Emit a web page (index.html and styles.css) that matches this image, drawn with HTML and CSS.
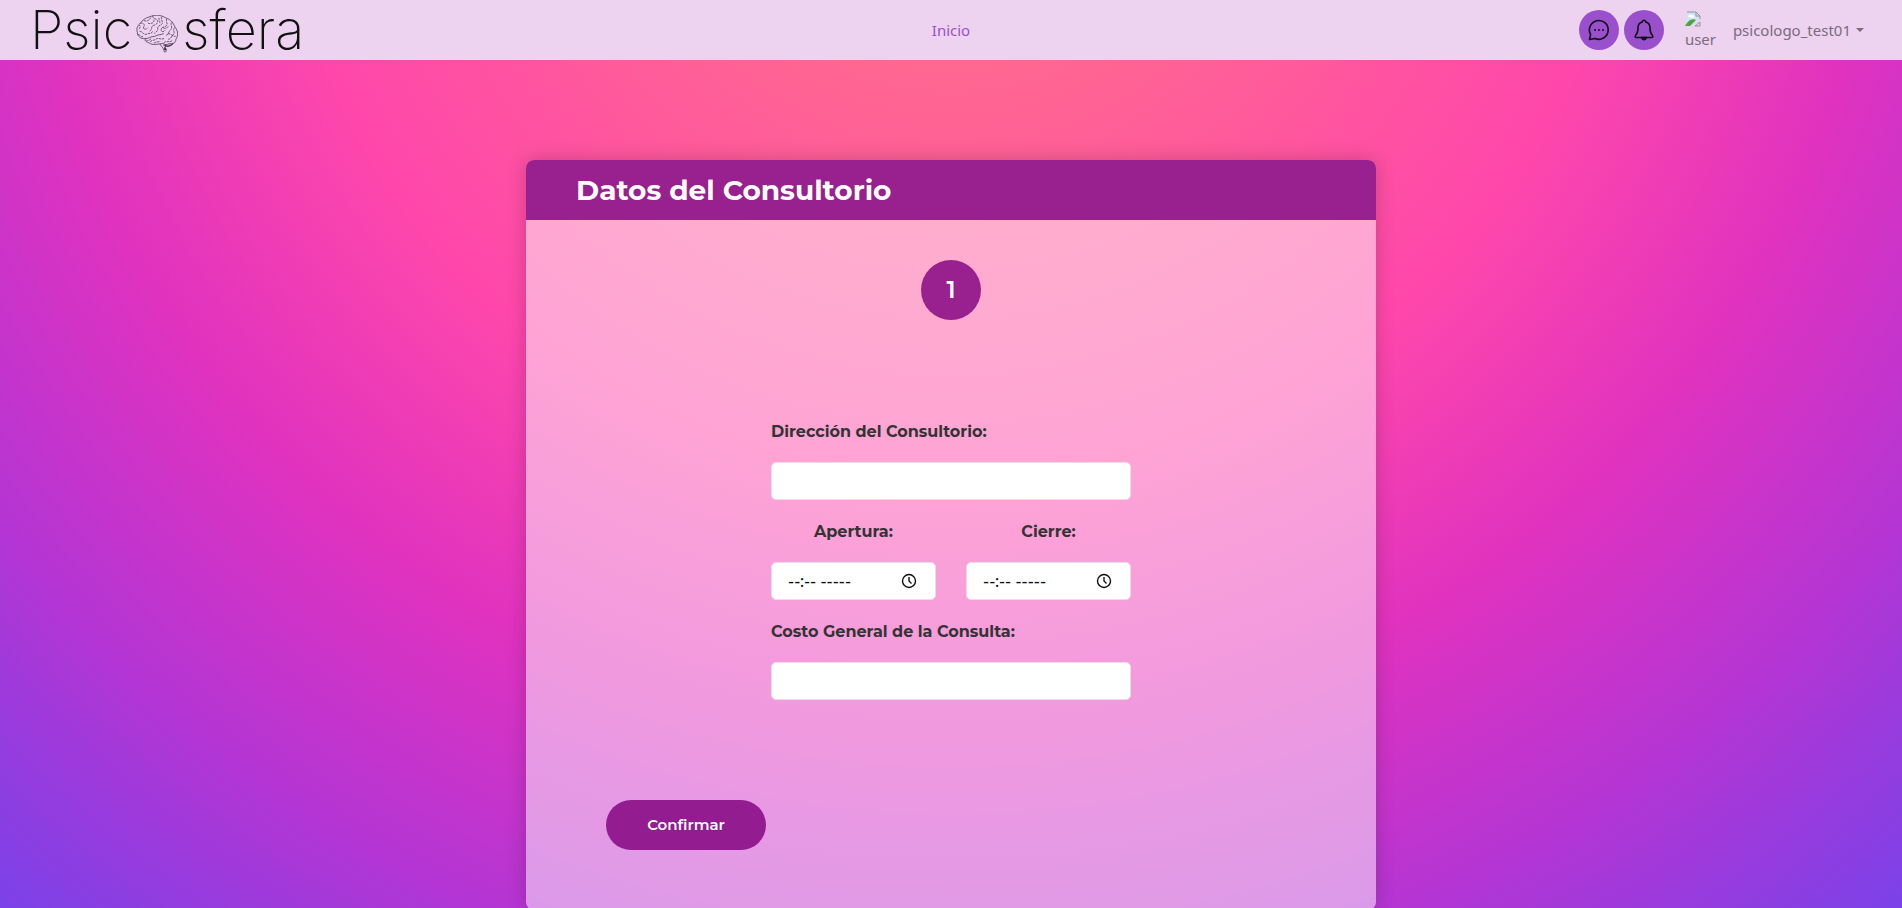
FILE: index.html
```html
<!DOCTYPE html>
<html lang="es">
<head>
<meta charset="utf-8">
<title>Psicosfera</title>
<link rel="stylesheet" href="styles.css">
</head>
<body>
<header class="navbar">
  <a class="brand" href="#" aria-label="Psicosfera">
    <span>Psic</span>
    <svg class="brain" viewBox="0 0 120 108" fill="none" stroke="#33283a" stroke-width="2" aria-hidden="true">
      <path d="M4 50C-1 36 8 27 14 21C23 8 38 5 48 2C62-2 75 2 85 8C100 12 108 25 111 34C122 46 120 61 114 69C114 79 105 84 96 81C88 86 82 84 76 81C62 83 48 87 38 80C29 75 24 76 27 67C14 69 4 61 4 50Z"/>
      <path d="M27 67C35 68 43 60 53 61C62 55 70 57 79 53M69 82C71 90 78 91 81 105C86 108 88 101 84 94L83 84M77 84C82 89 90 91 99 83"/>
      <path d="M12 24C20 20 27 27 22 34C18 42 30 42 34 36M22 15C31 20 38 15 42 7M34 23C44 27 54 20 51 13M48 2C46 10 57 9 61 15C65 22 57 28 51 29C42 31 47 42 39 46M10 46C20 46 19 56 29 55C37 51 45 54 48 46M74 5C69 13 78 17 75 24C69 31 61 30 62 39C63 49 53 48 52 53M88 11C84 18 92 23 87 30C81 36 73 32 72 41C70 49 80 49 83 43M101 21C98 31 106 34 99 42C91 49 94 55 86 58M111 36C103 42 113 49 107 56C99 61 102 68 92 69M41 77C43 70 52 74 58 68C67 64 72 72 82 66M51 81C56 75 65 78 69 75M79 79C87 72 96 80 105 72M8 39C14 35 14 31 9 29M6 55C13 57 15 63 21 62M91 53C98 52 106 61 113 61M65 8C65 14 69 16 68 22M78 37C84 39 90 37 93 31M29 71C36 76 38 70 44 67" stroke-dasharray="7 2"/>
      <path d="M83 87C90 91 100 89 106 81M80 93L86 96M80 97L87 100" stroke-width="3"/>
    </svg>
    <span>sfera</span>
  </a>
  <nav class="links"><a href="#">Inicio</a></nav>
  <div class="tools">
    <button class="round" type="button" aria-label="Mensajes">
      <svg viewBox="0 0 24 24" fill="none" stroke="#111" stroke-width="1.6" stroke-linecap="round" stroke-linejoin="round"><path d="M2.5 21.5L3.6 16.5A9.4 9.4 0 1 1 8 20.5Z"/><path d="M8 12V12.01M12 12V12.01M16 12V12.01" stroke-width="2"/></svg>
    </button>
    <button class="round" type="button" aria-label="Notificaciones">
      <svg viewBox="0 0 24 24" fill="none" stroke="#111" stroke-width="1.6" stroke-linecap="round" stroke-linejoin="round"><path d="M10.3 4A1.7 1.7 0 1 1 13.7 4C17 4.800 18 7.500 18 10C18 14 19 16 20.500 17.500Q21.500 19.500 19.500 19.500H4.500Q2.500 19.500 3.500 17.500C5 16 6 14 6 10C6 7.500 7 4.800 10.300 4"/><path d="M9.500 19.500Q12 24 14.500 19.500Z" fill="#111"/></svg>
    </button>
    <a class="avatar" href="#">
      <svg viewBox="0 0 16 16" aria-hidden="true"><path d="M1 1H11L15 5V15H1Z" fill="#d1e1fa"/><path d="M0 15Q5 6 11 9L5 15Z" fill="#4ca43a"/><path d="M3 6Q4 3 6 4Q9 3 9 7Z" fill="#fff"/><path d="M16 8L7 15H16Z" fill="#edd3f0"/><path d="M2 1H11L15 5V8M11 1V5H15M10 15H15V11Z" fill="none" stroke="#949494"/></svg>
      <span>user</span>
    </a>
    <button class="account" type="button">psicologo_test01</button>
  </div>
</header>
<main class="card">
  <h1 class="title">Datos del Consultorio</h1>
  <form class="form">
    <div class="step">1</div>
    <div class="fields">
      <label for="dir">Dirección del Consultorio:</label>
      <input id="dir" type="text">
      <div class="times">
        <div class="time"><label for="open">Apertura:</label>
          <div class="control"><input id="open" type="text" placeholder="--:-- -----"><svg viewBox="0 0 16 16" aria-hidden="true"><circle cx="8" cy="8" r="6.500"/><path d="M8 4V8L10.500 10.500"/></svg></div></div>
        <div class="time"><label for="close">Cierre:</label>
          <div class="control"><input id="close" type="text" placeholder="--:-- -----"><svg viewBox="0 0 16 16" aria-hidden="true"><circle cx="8" cy="8" r="6.500"/><path d="M8 4V8L10.500 10.500"/></svg></div></div>
      </div>
      <label for="cost">Costo General de la Consulta:</label>
      <input id="cost" type="text">
    </div>
    <button class="submit" type="submit">Confirmar</button>
  </form>
</main>
</body>
</html>
```
FILE: styles.css
```css
* { box-sizing: border-box; }
html { height: 100%; }
body {
  margin: 0;
  min-height: 100vh;
  font-family: Montserrat, "Open Sans", sans-serif;
  font-size: 16px;
  line-height: 24px;
  color: #333;
  background: radial-gradient(circle at 50% -20.71%, #ff7d7d 0%, #ff6890 17%, #ff47ab 46%, #e032bf 64%, #b335d4 82%, #7a42e8 100%) no-repeat fixed;
}
.navbar {
  display: grid;
  grid-template-columns: 1fr auto 1fr;
  align-items: center;
  height: 60px;
  padding: 0 30px;
  background: #edd3f0;
  font-family: "Noto Sans", sans-serif;
  font-size: 15px;
}
.brand {
  display: flex;
  align-items: center;
  color: #111;
  text-decoration: none;
  font: 200 54px/60px Inter, sans-serif;
}
.brain { width: 42px; height: 38px; margin: 8px 4px 0; }
.links a { color: #9a50cc; text-decoration: none; }
.tools { display: flex; align-items: center; justify-content: flex-end; }
.round {
  display: grid;
  place-items: center;
  width: 40px;
  height: 40px;
  margin-right: 5px;
  padding: 0;
  border: 0;
  border-radius: 50%;
  background: #9a50cc;
}
.round svg { width: 24px; height: 24px; }
.avatar {
  display: block;
  width: 32px;
  height: 40px;
  margin: 0 16px;
  padding-top: 1px;
  overflow: hidden;
  color: #7b6b7d;
  text-decoration: none;
}
.avatar svg { display: block; width: 16px; height: 16px; }
.account {
  display: flex;
  align-items: center;
  gap: 5px;
  margin-right: 8px;
  padding: 0;
  border: 0;
  background: none;
  color: #7b6b7d;
  font: inherit;
}
.account::after {
  content: "";
  border: 4px solid transparent;
  border-top-color: currentColor;
  border-bottom: 0;
}
.card {
  width: 850px;
  max-width: 100%;
  margin: 100px auto 0;
  border-radius: 8px;
  background: rgba(255, 255, 255, 0.5);
  box-shadow: 0 0 20px rgba(0, 0, 0, 0.2);
  overflow: hidden;
}
.title {
  margin: 0;
  padding: 0 50px;
  background: #98208f;
  color: #fff;
  font-size: 28px;
  font-weight: 700;
  line-height: 60px;
}
.form {
  display: flex;
  flex-direction: column;
  align-items: center;
  padding: 40px 80px 60px;
}
.step {
  width: 60px;
  border-radius: 50%;
  background: #98208f;
  color: #fff;
  font-size: 24px;
  font-weight: 600;
  line-height: 60px;
  text-align: center;
}
.fields {
  display: flex;
  flex-direction: column;
  width: 360px;
  margin: 92px 0 100px;
}
.fields label { padding: 8px 0; margin-bottom: 10px; line-height: 24px; font-weight: 700; }
.fields input {
  width: 100%;
  height: 38px;
  padding: 6px 16px;
  border: 1px solid #eadcea;
  border-radius: 5px;
  background: #fff;
  font: inherit;
}
.times { display: flex; gap: 30px; margin: 12px 0; }
.time { display: flex; flex: 1; flex-direction: column; text-align: center; }
.control { display: grid; align-items: center; }
.control input, .control svg { grid-area: 1 / 1; }
.control input { font-weight: 500; }
.control input::placeholder { color: #111; opacity: 1; }
.control svg { width: 16px; height: 16px; margin-right: 19px; justify-self: end; fill: none; stroke: #111; stroke-width: 1.4; }
.submit {
  align-self: flex-start;
  width: 160px;
  height: 50px;
  border: 0;
  border-radius: 25px;
  background: #921c90;
  color: #fff;
  font: inherit;
  font-size: 15px;
  font-weight: 600;
}
```
